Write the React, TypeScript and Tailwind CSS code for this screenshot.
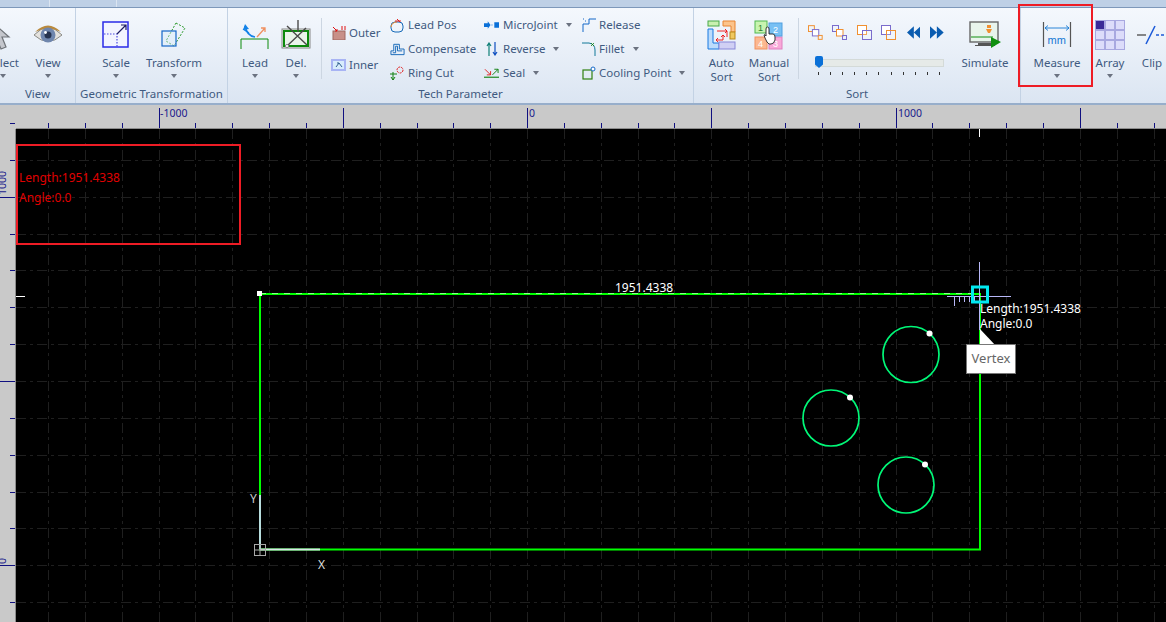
import React from "react";

const STEP = 36.85;
const xs = Array.from({ length: 32 }, (_, i) => 48 + i * STEP);
const ys = Array.from({ length: 14 }, (_, i) => 123 + i * STEP);

function Caret({ className = "" }: { className?: string }) {
  return <span className={`inline-block w-0 h-0 border-x-[3.5px] border-x-transparent border-t-[4px] border-t-[#6b7280] ${className}`} />;
}

function Big({ w, label, label2, caret = true, children }: { w: number; label: string; label2?: string; caret?: boolean; children: React.ReactNode }) {
  return (
    <div className="flex flex-col items-center shrink-0" style={{ width: w }}>
      <div className="h-[32px] flex items-center justify-center">{children}</div>
      <div className="mt-[5px] leading-[14px] text-center whitespace-nowrap">{label}</div>
      {label2 && <div className="leading-[14px] text-center whitespace-nowrap">{label2}</div>}
      {caret && !label2 && <Caret className="mt-[4px]" />}
    </div>
  );
}

function Small({ label, caret, gap = 3, icon }: { label: string; caret?: number; gap?: number; icon: React.ReactNode }) {
  return (
    <div className="h-[24px] flex items-center whitespace-nowrap">
      <span className="w-[15px] h-[15px] flex items-center justify-center shrink-0">{icon}</span>
      <span style={{ marginLeft: gap }}>{label}</span>
      {caret !== undefined && <Caret className="ml-[8px]" />}
    </div>
  );
}

function Group({ w, title, children, className = "" }: { w: number; title: string; children: React.ReactNode; className?: string }) {
  return (
    <div className="relative h-full shrink-0 border-r border-[#c3d2e4] flex flex-col overflow-hidden" style={{ width: w }}>
      <div className={`h-[79px] flex items-start pt-[11px] ${className}`}>{children}</div>
      <div className="h-[16px] leading-[14px] text-center whitespace-nowrap">{title}</div>
    </div>
  );
}

const Sep = () => <div className="w-px h-[61px] bg-[#ccd6e2] shrink-0" />;

function ArrowIcon() {
  return (
    <svg width="34" height="34" viewBox="0 0 34 34">
      <path d="M6 4 L6 26 L11 21 L15 31 L20 29 L16 19 L23 19 Z" fill="#c4c6cc" stroke="#6f7378" strokeWidth="1.2" />
    </svg>
  );
}
function EyeIcon() {
  return (
    <svg width="30" height="24" viewBox="0 0 30 24">
      <path d="M1 12 Q15 -3 29 12 Q15 25 1 12 Z" fill="#e4e2de" stroke="#8a8a86" />
      <path d="M2 9 Q15 -4 28 9 Q15 2 2 9 Z" fill="#b98a3e" />
      <circle cx="15" cy="12" r="7.5" fill="#6f86ad" />
      <circle cx="15" cy="12" r="3.5" fill="#26334e" />
      <circle cx="12.5" cy="9.5" r="1.4" fill="#fff" />
    </svg>
  );
}
function ScaleIcon() {
  return (
    <svg width="28" height="28" viewBox="0 0 28 28">
      <rect x="1" y="1" width="25" height="25" fill="#f2f4ff" stroke="#2a2ae8" strokeWidth="1.5" />
      <path d="M2 13 H15 V26" fill="none" stroke="#4a4ae0" strokeWidth="1.2" strokeDasharray="1.5 1.5" />
      <path d="M15 13 L24 4 M19 4 H24 V9" fill="none" stroke="#1c1c60" strokeWidth="1.2" />
    </svg>
  );
}
function TransformIcon() {
  return (
    <svg width="26" height="26" viewBox="0 0 26 26">
      <path d="M15 1 L24 6 L13 24 L5 19 Z" fill="none" stroke="#2a9a2a" strokeWidth="1" strokeDasharray="2 1.5" />
      <rect x="1" y="9" width="14" height="15" fill="#d8ecfb" fillOpacity="0.4" stroke="#1467c8" strokeWidth="1.2" />
    </svg>
  );
}
function LeadIcon() {
  return (
    <svg width="30" height="28" viewBox="0 0 30 28">
      <path d="M1 28 V18 H28 V28" fill="none" stroke="#0a8a0a" strokeWidth="1" />
      <path d="M5 5 Q7 15 15 16" fill="none" stroke="#1382e8" strokeWidth="1.6" />
      <path d="M3 9 L5 3 L9 8" fill="#1382e8" />
      <path d="M3 8 L9 12" stroke="#1382e8" strokeWidth="1.4" />
      <path d="M17 16 L25 7 M21 7 H25 V11" fill="none" stroke="#f09060" strokeWidth="1.3" />
    </svg>
  );
}
function DelIcon() {
  return (
    <svg width="30" height="30" viewBox="0 0 30 30">
      <rect x="1" y="9" width="28" height="19" fill="#eaf4ea" stroke="#888" strokeWidth="1" />
      <rect x="3" y="11" width="24" height="15" fill="none" stroke="#0c8a0c" strokeWidth="2" />
      <path d="M6 6 L26 25 M25 8 L6 26 M17 0 V12" stroke="#4b4b4b" strokeWidth="1.4" />
      <circle cx="6" cy="26" r="1.6" fill="#fff" stroke="#888" />
    </svg>
  );
}
function AutoSortIcon() {
  return (
    <svg width="30" height="30" viewBox="0 0 30 30">
      <rect x="1" y="1" width="11" height="5" fill="#c9f0b0" stroke="#48a848" />
      <path d="M16 1 H28 V12 H24 V6 H16 Z" fill="#fcc48c" stroke="#e88430" />
      <path d="M1 9 H6 V23 H12 V29 H1 Z" fill="#bcdcfc" stroke="#1878e0" />
      <rect x="23" y="12" width="5" height="7" fill="#f0c860" stroke="#b88818" />
      <rect x="12" y="22" width="16" height="7" fill="#d0d0f4" stroke="#8888d8" />
      <path d="M10 11 H20 V17 M18 9 L20 11 L18 13 M9 20 H16 V15 M11 18 L9 20 L11 22 M14 17 L16 15 L18 17" fill="none" stroke="#ee1010" strokeWidth="0.9" />
    </svg>
  );
}
function ManualSortIcon() {
  return (
    <svg width="30" height="30" viewBox="0 0 30 30">
      <rect x="1" y="17" width="12" height="12" fill="#fcb890" stroke="#f09060" />
      <rect x="15" y="17" width="13" height="12" fill="#f8a8d8" stroke="#e080c0" />
      <rect x="15" y="3" width="13" height="13" fill="#78c0f4" stroke="#50a0e0" />
      <rect x="1" y="1" width="12" height="12" fill="#c8f4b0" stroke="#50b850" />
      <text x="4" y="11" fontSize="9" fill="#308030" fontFamily="Liberation Sans, sans-serif">1</text>
      <text x="19" y="13" fontSize="9" fill="#fff" fontFamily="Liberation Sans, sans-serif">2</text>
      <text x="19" y="27" fontSize="9" fill="#fff" fontFamily="Liberation Sans, sans-serif">3</text>
      <text x="4" y="27" fontSize="9" fill="#fff" fontFamily="Liberation Sans, sans-serif">4</text>
      <path d="M12 9 Q12 7 13.5 7 Q15 7 15 9 V14 H19 Q21 14 21 17 V20 Q20 24 17 24 H15 Q13 23 11 18 L10 15 Q11 14 12 16 Z" fill="#fff" stroke="#222" strokeWidth="0.9" />
    </svg>
  );
}
function SquarePair({ a, b, flip }: { a: string; b: string; flip?: boolean }) {
  return (
    <svg width="15" height="15" viewBox="0 0 15 15">
      {flip ? (
        <>
          <rect x="0.5" y="0.5" width="9" height="9" fill="#fff" stroke={a} />
          <rect x="5.5" y="5.5" width="9" height="9" fill="#fff" fillOpacity="0.2" stroke={b} />
        </>
      ) : (
        <>
          <rect x="0.5" y="0.5" width="6" height="6" fill="none" stroke={a} />
          <rect x="4.5" y="4.5" width="6.5" height="6.5" fill="#fff" stroke={b} />
          <rect x="10.5" y="10.5" width="4" height="4" fill="none" stroke={a} />
        </>
      )}
    </svg>
  );
}
function SimulateIcon() {
  return (
    <svg width="32" height="28" viewBox="0 0 32 28">
      <rect x="1" y="1" width="28" height="20" fill="#e8f4ec" stroke="#666" strokeWidth="1.4" />
      <path d="M2 16 H24" stroke="#109010" strokeWidth="1" />
      <rect x="18" y="4" width="4" height="3" fill="#f09030" />
      <path d="M17 8 H23 L21 12 H19 Z" fill="#f09030" />
      <path d="M9 22 H22 V24 H26 V25 H6 V24 H9 Z" fill="#555" />
      <path d="M22 16 L32 21 L22 27 Z" fill="#109010" />
    </svg>
  );
}
function MeasureIcon() {
  return (
    <svg width="30" height="26" viewBox="0 0 30 26">
      <path d="M1.5 0 V25 M28.5 0 V25" stroke="#555" strokeWidth="1.2" />
      <path d="M3 6 H27 M6 3.5 L3 6 L6 8.5 M24 3.5 L27 6 L24 8.5" fill="none" stroke="#1478d4" strokeWidth="0.9" />
      <text x="5.5" y="22" fontSize="11" fill="#1478d4" fontFamily="Liberation Sans, sans-serif">mm</text>
    </svg>
  );
}
function ArrayIcon() {
  return (
    <svg width="30" height="30" viewBox="0 0 30 30">
      {[0, 1, 2].map((r) =>
        [0, 1, 2].map((c) => (
          <rect key={`${r}-${c}`} x={0.5 + c * 10} y={0.5 + r * 10} width="9" height="9" fill={r === 0 && c === 0 ? "#3a2a98" : "#dcdcfa"} stroke="#a8a8e0" />
        ))
      )}
    </svg>
  );
}
function ClipIcon() {
  return (
    <svg width="30" height="22" viewBox="0 0 30 22">
      <path d="M0 11 H9" stroke="#555" strokeWidth="1.4" />
      <path d="M9 20 L18 2" stroke="#1c5ad8" strokeWidth="1.6" />
      <path d="M19 11 H30" stroke="#1c5ad8" strokeWidth="1.4" strokeDasharray="3 2" />
    </svg>
  );
}

function TopRuler() {
  return (
    <div className="relative h-[24px] bg-[#c9c9c9] shrink-0 text-[#1a1a8c] text-[10.5px]">
      <svg width="1166" height="24" viewBox="0 105 1166 24" className="block">
        <path d="M10 123.5 H15" stroke="#101080" />
        {xs.map((x, i) => {
          const major = (i + 2) % 5 === 0 && i >= 3;
          return <path key={i} d={`M${Math.round(x) + 0.5} ${major ? 108 : 123} V129`} stroke="#101080" />;
        })}
      </svg>
      <span className="absolute left-[160px] top-[1px] leading-[14px]">-1000</span>
      <span className="absolute left-[529px] top-[1px] leading-[14px]">0</span>
      <span className="absolute left-[898px] top-[1px] leading-[14px]">1000</span>
      <div className="absolute left-[16px] right-0 bottom-0 h-px bg-[#8c8c8c]" />
    </div>
  );
}

function LeftRuler() {
  return (
    <div className="relative w-[16px] bg-[#c9c9c9] shrink-0 border-r border-[#8c8c8c] text-[#1a1a8c] text-[10.5px] overflow-hidden">
      <svg width="16" height="493" viewBox="0 129 16 493" className="block">
        {ys.map((y, i) => {
          const major = i === 2 || i === 7 || i === 12;
          return <path key={i} d={`M${major ? 0 : 10} ${Math.round(y) + 0.5} H16`} stroke="#101080" />;
        })}
      </svg>
      <span className="absolute left-[-12px] top-[47px] leading-[14px] -rotate-90 w-[28px] text-center">1000</span>
      <span className="absolute left-[-1px] top-[425px] leading-[14px] -rotate-90">0</span>
    </div>
  );
}

function Drawing() {
  return (
    <svg width="1150" height="493" viewBox="16 129 1150 493" className="absolute inset-0">
      {xs.map((x, i) => (
        <path key={i} d={`M${Math.round(x) + 0.5} 129 V622`} stroke="#1f1f1f" strokeDasharray="10 4 3 4" />
      ))}
      {ys.map((y, i) => (
        <path key={i} d={`M16 ${Math.round(y) + 0.5} H1166`} stroke="#1f1f1f" strokeDasharray="10 4 3 4" />
      ))}
      <path d="M16 296.5 H25" stroke="#fff" />
      <path d="M979.5 129 V137" stroke="#fff" />

      <path d="M260 294 H980 V549.5 H260 Z" fill="none" stroke="#00ff00" strokeWidth="2" />
      <path d="M260 293.5 H972" stroke="#ffffff" strokeOpacity="0.55" strokeDasharray="6 6" />
      <path d="M260 495 V549" stroke="#b8dede" strokeWidth="2" />
      <path d="M260 549.5 H320" stroke="#d8e8e8" strokeWidth="2" />
      <rect x="254.5" y="544.5" width="11" height="11" fill="none" stroke="#a8a8a8" />
      <path d="M254 550 H266 M260 544 V556" stroke="#a8a8a8" />

      <circle cx="911" cy="354.5" r="28" fill="none" stroke="#00f878" strokeWidth="1.7" />
      <circle cx="831" cy="418" r="28" fill="none" stroke="#00f878" strokeWidth="1.7" />
      <circle cx="906" cy="485" r="28" fill="none" stroke="#00f878" strokeWidth="1.7" />
      <rect x="257" y="291" width="5" height="5" fill="#fff" />
      <circle cx="929.5" cy="333.5" r="3" fill="#fff" />
      <circle cx="850" cy="397.5" r="3" fill="#fff" />
      <circle cx="925" cy="464.5" r="3" fill="#fff" />

      <path d="M979.5 262 V330" stroke="#b8b8f8" />
      <path d="M947 296.5 H1011" stroke="#b8b8f8" />
      <path d="M954.5 297 V306 M959.5 297 V302 M964.5 297 V302 M969.5 297 V302 M974.5 297 V302" stroke="#b8b8f8" />
      <rect x="972.5" y="287" width="15" height="15" fill="none" stroke="#00e8f0" strokeWidth="3" />
    </svg>
  );
}

export default function App() {
  return (
    <div className="w-[1166px] h-[622px] overflow-hidden flex flex-col bg-black text-[12px] text-[#3f5a80]" style={{ fontFamily: '"Noto Sans", "Open Sans", sans-serif' }}>
      <div className="h-[8px] shrink-0 flex bg-[#bed0e6] border-b border-[#7d98ba]">
        <div className="w-[50px] border-r border-[#dbe5f1]" />
        <div className="w-[67px] border-r border-[#dbe5f1]" />
      </div>

      <div className="relative h-[97px] shrink-0 flex text-[11.5px] bg-gradient-to-b from-[#f4f8fd] to-[#dbe5f2] border-b-2 border-[#97aecb]">
        <Group w={76} title="View">
          <div className="ml-[-26px] flex">
            <Big w={58} label="Select"><ArrowIcon /></Big>
            <div className="ml-[-3px]">
              <Big w={38} label="View"><EyeIcon /></Big>
            </div>
          </div>
        </Group>
        <Group w={152} title="Geometric Transformation" className="pl-[12px]">
          <Big w={56} label="Scale"><ScaleIcon /></Big>
          <Big w={60} label="Transform"><TransformIcon /></Big>
        </Group>
        <Group w={466} title="Tech Parameter" className="pl-[6px] gap-0">
          <Big w={42} label="Lead"><LeadIcon /></Big>
          <Big w={40} label="Del."><DelIcon /></Big>
          <div className="ml-[5px] mt-[-1px]"><Sep /></div>
          <div className="ml-[9px] mt-[2px] w-[59px] flex flex-col gap-[8px]">
            <Small label="Outer" icon={
              <svg width="14" height="14" viewBox="0 0 14 14"><rect x="1" y="5" width="12" height="9" fill="#c89088" stroke="#a06860" /><path d="M1 1 L5 5 M3 5 H5 V3 M10 0 V4 M13 0 V4" stroke="#e01010" fill="none" /></svg>
            } />
            <Small label="Inner" icon={
              <svg width="15" height="12" viewBox="0 0 15 12"><rect x="0" y="0" width="15" height="12" fill="#a8b4f4" /><rect x="2" y="2" width="11" height="8" fill="#d8ecfc" /><path d="M5 8 L8 4 L11 8 M8 4 H6" stroke="#306090" fill="none" /></svg>
            } />
          </div>
          <div className="mt-[-6px] w-[94px] flex flex-col">
            <Small label="Lead Pos" icon={
              <svg width="15" height="15" viewBox="0 0 15 15"><rect x="1" y="4" width="12" height="10" rx="4" fill="none" stroke="#1468b8" /><path d="M1 9 Q2 4 7 4" fill="none" stroke="#f09030" /><path d="M5 3 H11 M7 1 L10 4" stroke="#e02020" /></svg>
            } />
            <Small label="Compensate" icon={
              <svg width="16" height="14" viewBox="0 0 16 14"><path d="M1 13 V9 H4 V2 H10 V7 H15 V13 Z" fill="none" stroke="#1468b8" /><path d="M3 11 H6 V4 H8 V9 H13" fill="none" stroke="#1468b8" /></svg>
            } />
            <Small label="Ring Cut" icon={
              <svg width="15" height="15" viewBox="0 0 15 15"><circle cx="10" cy="4" r="3" fill="none" stroke="#e02020" strokeDasharray="2 1" /><path d="M0 8 H7 M3 6 V14 M1 11 L3 14 L5 11" fill="none" stroke="#108010" /></svg>
            } />
          </div>
          <div className="mt-[-6px] w-[97px] flex flex-col">
            <Small label="MicroJoint" caret={0} gap={4} icon={
              <svg width="16" height="8" viewBox="0 0 16 8"><path d="M0 2 H4 V0 L7 4 L4 8 V6 H0 Z M16 1 V7 H11 V1 Z" fill="#0a70d8" /><path d="M8 4 H10" stroke="#0a70d8" strokeDasharray="1 1" /></svg>
            } />
            <Small label="Reverse" caret={0} gap={4} icon={
              <svg width="12" height="14" viewBox="0 0 12 14"><path d="M3 14 V2 M1 4 L3 1 L5 4" fill="none" stroke="#108078" strokeWidth="1.2" /><path d="M9 0 V12 M7 10 L9 13 L11 10" fill="none" stroke="#1050c0" strokeWidth="1.2" /></svg>
            } />
            <Small label="Seal" caret={0} gap={4} icon={
              <svg width="16" height="12" viewBox="0 0 16 12"><path d="M0 10.5 H16" stroke="#108010" strokeWidth="1.2" /><path d="M1 2 L7 8 M3 8 H7 V4" fill="none" stroke="#e02020" /><path d="M9 8 L15 2 M11 2 H15 V6" fill="none" stroke="#108010" /></svg>
            } />
          </div>
          <div className="mt-[-6px] flex flex-col">
            <Small label="Release" icon={
              <svg width="14" height="14" viewBox="0 0 14 14"><path d="M1 14 V6 H7 V1 H14" fill="none" stroke="#1468c8" /><path d="M3 3 H5 M1 1 H3" stroke="#1468c8" strokeDasharray="1 1" /></svg>
            } />
            <Small label="Fillet" caret={0} icon={
              <svg width="14" height="14" viewBox="0 0 14 14"><path d="M0 1 H7 Q13 2 13 8 V14" fill="none" stroke="#107898" /><path d="M9 1 L12 4 M12 1 L9 4" stroke="#108010" strokeWidth="0.8" /></svg>
            } />
            <Small label="Cooling Point" caret={0} icon={
              <svg width="14" height="14" viewBox="0 0 14 14"><rect x="1" y="4" width="9" height="9" fill="none" stroke="#308010" strokeWidth="1.2" /><circle cx="11" cy="3" r="2" fill="#fff" stroke="#1468c8" /></svg>
            } />
          </div>
        </Group>
        <Group w={327} title="Sort" className="pl-[4px]">
          <Big w={47} label="Auto" label2="Sort" caret={false}><AutoSortIcon /></Big>
          <Big w={48} label="Manual" label2="Sort" caret={false}><ManualSortIcon /></Big>
          <div className="ml-[5px] mt-[-1px]"><Sep /></div>
          <div className="ml-[16px] w-[129px] flex flex-col">
            <div className="h-[16px] mt-[5px] ml-[-7px] flex items-center">
              <SquarePair a="#f09030" b="#7a6ccc" />
              <span className="ml-[9px]"><SquarePair a="#7a6ccc" b="#f09030" /></span>
              <span className="ml-[10px]"><SquarePair a="#f09030" b="#7a6ccc" flip /></span>
              <span className="ml-[9px]"><SquarePair a="#7a6ccc" b="#f09030" flip /></span>
              <svg width="14" height="13" viewBox="0 0 14 13" className="ml-[11px]"><path d="M7 0 V13 L0 6.5 Z M14 0 V13 L7 6.5 Z" fill="#0a5cb0" /></svg>
              <svg width="14" height="13" viewBox="0 0 14 13" className="ml-[10px]"><path d="M0 0 V13 L7 6.5 Z M7 0 V13 L14 6.5 Z" fill="#0a5cb0" /></svg>
            </div>
            <div className="relative mt-[19px] h-[8px] bg-[#e6eae8] border border-[#d4dad8]">
              <div className="absolute left-[-1px] top-[-4px] w-[8px] h-[12px] bg-[#0a70d8] rounded-t-[2px]" style={{ clipPath: "polygon(0 0,100% 0,100% 70%,50% 100%,0 70%)" }} />
            </div>
            <div className="mt-[5px] flex justify-between px-[3px] pr-[4px]">
              {Array.from({ length: 11 }, (_, i) => <span key={i} className="w-px h-[3px] bg-[#333]" />)}
            </div>
          </div>
          <div className="ml-[10px]">
            <Big w={62} label="Simulate" caret={false}><SimulateIcon /></Big>
          </div>
        </Group>
        <div className="h-[79px] flex items-start pt-[11px] pl-[8px] shrink-0">
          <Big w={56} label="Measure"><MeasureIcon /></Big>
          <Big w={50} label="Array"><ArrayIcon /></Big>
          <Big w={34} label="Clip" caret={false}><ClipIcon /></Big>
        </div>
        <div className="absolute left-[1018px] top-[-4px] w-[75px] h-[83px] border-2 border-[#ee1c25]" />
      </div>

      <TopRuler />

      <div className="flex flex-1 min-h-0">
        <LeftRuler />
        <div className="relative flex-1 bg-black">
          <Drawing />
          <div className="absolute left-0 top-[15px] w-[225px] h-[101px] border-2 border-[#ee1c25] text-[#e00000] pl-[1px] pt-[22px] leading-[20px]">
            <div>Length:1951.4338</div>
            <div>Angle:0.0</div>
          </div>
          <span className="absolute left-[599px] top-[152px] leading-[14px] text-white">1951.4338</span>
          <div className="absolute left-[964px] top-[172px] leading-[15px] text-white">
            <div>Length:1951.4338</div>
            <div>Angle:0.0</div>
          </div>
          <svg width="20" height="18" viewBox="0 0 20 18" className="absolute left-[964px] top-[200px]">
            <path d="M0 0 V17 H16 Z" fill="#fff" />
          </svg>
          <div className="absolute left-[950px] top-[215px] w-[50px] h-[30px] bg-white border border-[#777] flex items-center justify-center text-[13px] text-[#666]">Vertex</div>
          <span className="absolute left-[234px] top-[363px] leading-[14px] text-[#ccc]">Y</span>
          <span className="absolute left-[302px] top-[429px] leading-[14px] text-[#ddd]">X</span>
        </div>
      </div>
    </div>
  );
}
